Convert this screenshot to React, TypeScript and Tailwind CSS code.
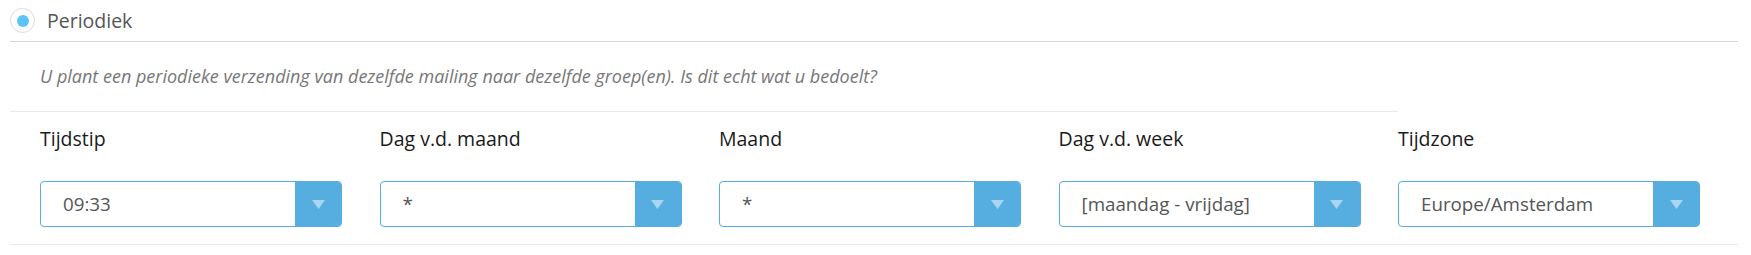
import React from 'react';

const fields = [
  { label: 'Tijdstip', value: '09:33' },
  { label: 'Dag v.d. maand', value: '*' },
  { label: 'Maand', value: '*' },
  { label: 'Dag v.d. week', value: '[maandag - vrijdag]' },
  { label: 'Tijdzone', value: 'Europe/Amsterdam' },
];

const SelectBox: React.FC<{ value: string }> = ({ value }) => (
  <div className="flex h-[46px] w-[302px] rounded-[4px] border border-[#55ade0] bg-white">
    <div className="flex flex-1 items-center pl-[22px] text-[18.75px] text-[#555]">{value}</div>
    <div className="flex w-[46px] items-center justify-center rounded-r-[3px] bg-[#55ade0]">
      <svg width="13" height="9" viewBox="0 0 13 9">
        <polygon points="0,0 13,0 6.5,9" fill="#a9d7f3" />
      </svg>
    </div>
  </div>
);

export default function App() {
  return (
    <div className="h-[255px] w-[1751px] bg-white" style={{ fontFamily: '"Open Sans", sans-serif' }}>
      <div className="ml-[10px] w-[1728px]">
        <div className="flex h-[42px] items-center border-b border-[#d6d6d6]">
          <div className="flex h-[25px] w-[25px] items-center justify-center rounded-full border border-[#dcdcdc]">
            <div className="h-[12px] w-[12px] rounded-full bg-[#5bc4fc]" />
          </div>
          <span className="ml-[12px] text-[19.5px] text-[#555]">Periodiek</span>
        </div>

        <div className="flex h-[70px] w-[1388px] items-center border-b border-[#e8e8e8] pl-[30px]">
          <p className="text-[18px] italic text-[#777]">
            U plant een periodieke verzending van dezelfde mailing naar dezelfde groep(en). Is dit echt wat u bedoelt?
          </p>
        </div>

        <div className="flex h-[133px] border-b border-[#e8e8e8] pl-[30px]">
          {fields.map((f) => (
            <div key={f.label} className="flex w-[339.5px] flex-col">
              <div className="mt-[13px] h-[28px] text-[19.5px] leading-[28px] text-[#1a1a1a]">{f.label}</div>
              <div className="mt-[28px]">
                <SelectBox value={f.value} />
              </div>
            </div>
          ))}
        </div>
      </div>
    </div>
  );
}
